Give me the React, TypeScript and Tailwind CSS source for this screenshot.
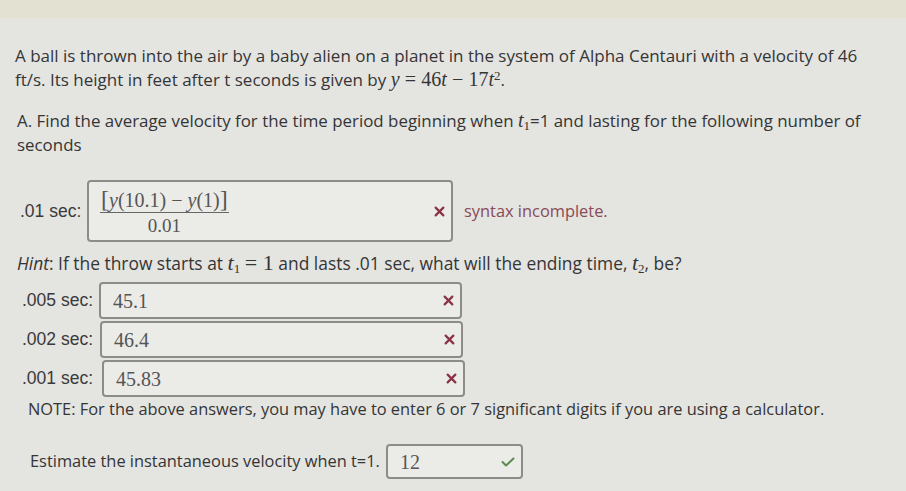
import React from 'react'

const sans = { fontFamily: '"Open Sans", Lato, sans-serif' }

function Cross({ className = '' }: { className?: string }) {
  return (
    <svg viewBox="0 0 10 10" className={`size-[11px] shrink-0 ${className}`}>
      <path d="M1.5 1.5 L8.5 8.5 M8.5 1.5 L1.5 8.5" stroke="#8b3346" strokeWidth="2" strokeLinecap="round" />
    </svg>
  )
}

function Check() {
  return (
    <svg viewBox="0 0 14 10" className="h-[10px] w-[14px] shrink-0">
      <path d="M1.5 5 L5 8.5 L12.5 1.5" stroke="#5d8a4e" strokeWidth="2" fill="none" strokeLinecap="round" strokeLinejoin="round" />
    </svg>
  )
}

const M = ({ children }: { children: React.ReactNode }) => (
  <span className="font-['Liberation_Serif',serif] italic">{children}</span>
)
const N = ({ children }: { children: React.ReactNode }) => (
  <span className="font-['Liberation_Serif',serif]">{children}</span>
)
const Sub = ({ children }: { children: React.ReactNode }) => (
  <sub className="font-['Liberation_Serif',serif] text-[13px] leading-none">{children}</sub>
)

function AnswerRow({ label, value, ml }: { label: string; value: string; ml: string }) {
  return (
    <div className="flex h-[39px] items-center">
      <span className="w-[99px] shrink-0 whitespace-nowrap pl-[22px] font-['Liberation_Sans',sans-serif] text-[17.5px] text-[#3a3a3a]">
        {label}
      </span>
      <div
        className={`flex h-[37px] w-[363px] shrink-0 items-center justify-between rounded-[4px] border-2 border-[#8d8c88] bg-[#ebebe8] pl-[12px] pr-[6px] ${ml}`}
      >
        <span className="font-['Liberation_Serif',serif] text-[20px] text-[#555]">{value}</span>
        <Cross />
      </div>
    </div>
  )
}

export default function App() {
  return (
    <div className="h-[491px] w-[906px] overflow-hidden bg-[#e4e4e1] text-[#353535]" style={sans}>
      <div className="h-[18px] bg-[#e3e1d2]" />
      <div className="whitespace-nowrap pl-[15px] pt-[26px] text-[17px] leading-[24px]">
        <p>A ball is thrown into the air by a baby alien on a planet in the system of Alpha Centauri with a velocity of 46</p>
        <p>
          ft/s. Its height in feet after t seconds is given by{' '}
          <span className="text-[20px] leading-none">
            <M>y</M> <N>=</N> <N>46</N>
            <M>t</M> <N>&minus;</N> <N>17</N>
            <M>t</M>
          </span>
          <sup className="font-['Liberation_Serif',serif] text-[13px] leading-none">2</sup>.
        </p>
      </div>
      <div className="whitespace-nowrap pl-[17px] pt-[17px] text-[16.9px] leading-[24px]">
        <p className="h-[24px]">
          A. Find the average velocity for the time period beginning when{' '}
          <span className="text-[20px] leading-none">
            <M>t</M>
          </span>
          <Sub>1</Sub>=1 and lasting for the following number of
        </p>
        <p>seconds</p>
      </div>

      <div className="mt-[23px] flex h-[62px] items-center">
        <span className="w-[87px] shrink-0 whitespace-nowrap pl-[20px] font-['Liberation_Sans',sans-serif] text-[17.5px] text-[#3a3a3a]">
          .01 sec:
        </span>
        <div className="flex h-[62px] w-[366px] shrink-0 items-center justify-between rounded-[4px] border-2 border-[#8d8c88] bg-[#ebebe8] pl-[11px] pr-[6px]">
          <div className="flex flex-col items-center font-['Liberation_Serif',serif] text-[20px] leading-[21px] text-[#555]">
            <span className="whitespace-nowrap border-b border-[#666] px-[1px] pb-[1px]">
              <span className="text-[24px] leading-none">[</span>
              <i>y</i>(10.1) &minus; <i>y</i>(1)
              <span className="text-[24px] leading-none">]</span>
            </span>
            <span className="pt-[2px] text-[19px]">0.01</span>
          </div>
          <Cross />
        </div>
        <span className="ml-[11px] whitespace-nowrap text-[16.4px] text-[#8a4a57]">syntax incomplete.</span>
      </div>

      <p className="h-[32px] whitespace-nowrap pl-[17px] pt-[8px] text-[17.4px] leading-[24px]">
        <i>Hint</i>: If the throw starts at{' '}
        <span className="text-[22px] leading-none">
          <M>t</M>
        </span>
        <Sub>1</Sub>{' '}
        <span className="text-[22px] leading-none">
          <N>=</N> <N>1</N>
        </span>{' '}
        and lasts .01 sec, what will the ending time,{' '}
        <span className="text-[22px] leading-none">
          <M>t</M>
        </span>
        <Sub>2</Sub>, be?
      </p>

      <div className="mt-[7px] flex flex-col">
        <AnswerRow label=".005 sec:" value="45.1" ml="ml-0" />
        <AnswerRow label=".002 sec:" value="46.4" ml="ml-[1px]" />
        <AnswerRow label=".001 sec:" value="45.83" ml="ml-[3px]" />
      </div>

      <p className="whitespace-nowrap pl-[28px] text-[16.4px] leading-[22px]">
        NOTE: For the above answers, you may have to enter 6 or 7 significant digits if you are using a calculator.
      </p>

      <div className="mt-[24px] flex h-[35px] items-center">
        <span className="w-[386px] shrink-0 whitespace-nowrap pl-[30px] text-[16.4px]">Estimate the instantaneous velocity when t=1.</span>
        <div className="flex h-[35px] w-[137px] shrink-0 items-center justify-between rounded-[4px] border-2 border-[#8d8c88] bg-[#ebebe8] pl-[12px] pr-[6px]">
          <span className="font-['Liberation_Serif',serif] text-[20px] text-[#555]">12</span>
          <Check />
        </div>
      </div>
    </div>
  )
}
